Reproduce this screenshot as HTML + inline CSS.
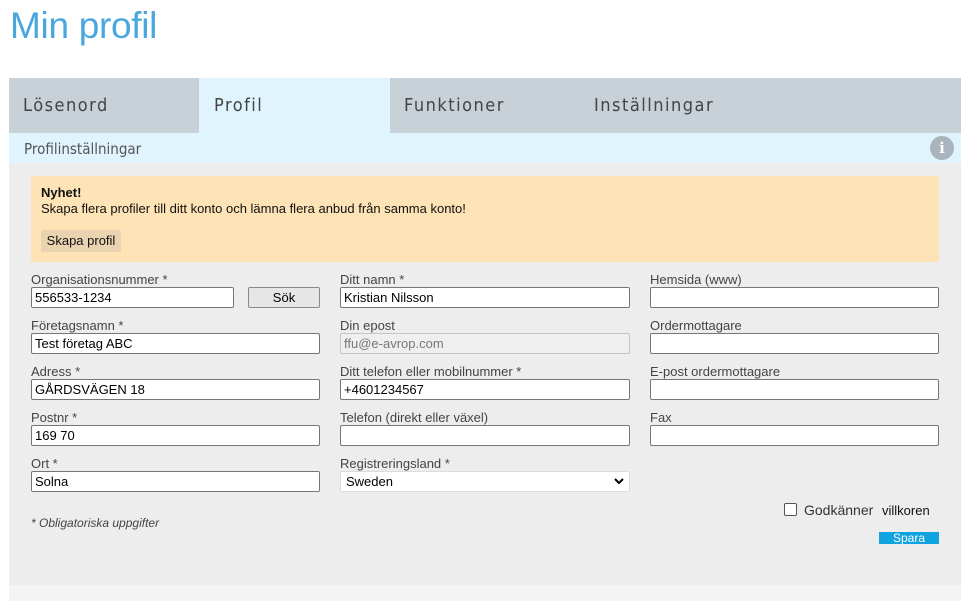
<!DOCTYPE html>
<html><head><meta charset="utf-8"><style>
*{box-sizing:border-box;margin:0;padding:0}
body{width:969px;height:606px;background:#fff;font-family:"Liberation Sans",sans-serif;position:relative;overflow:hidden}
.a{position:absolute}
h1{position:absolute;left:10px;top:5px;font-size:37px;color:#49a6de;font-family:"Liberation Sans",sans-serif;font-weight:normal;letter-spacing:-0.3px}
.tab{position:absolute;top:78px;height:55px;line-height:55px;font-size:18px;color:#444;letter-spacing:1.5px;font-family:"DejaVu Sans Condensed","Liberation Sans",sans-serif}
.lbl{position:absolute;font-size:13px;color:#444}
.inp{position:absolute;height:21px;background:#fff;border:1px solid #767676;border-radius:2px;font-size:13px;color:#000;padding-left:3px;line-height:19px}
</style></head><body>
<h1>Min profil</h1>
<div class="a" style="left:9px;top:78px;width:952px;height:55px;background:#c8d0d8"></div>
<div class="a" style="left:199px;top:78px;width:191px;height:55px;background:#dff4fd"></div>
<div class="tab" style="left:23px">Lösenord</div>
<div class="tab" style="left:214px">Profil</div>
<div class="tab" style="left:404px">Funktioner</div>
<div class="tab" style="left:594px">Inställningar</div>
<div class="a" style="left:9px;top:133px;width:952px;height:30px;background:#dff4fd"></div>
<div class="a" style="left:24px;top:140px;font-size:15px;color:#555;font-family:'DejaVu Sans Condensed',sans-serif">Profilinställningar</div>
<div class="a" style="left:930px;top:136px;width:24px;height:24px;border-radius:50%;background:#a9b4bc;color:#fff;font-weight:bold;font-size:15px;text-align:center;line-height:24px;font-family:'DejaVu Serif',serif">i</div>
<div class="a" style="left:9px;top:163px;width:952px;height:422px;background:#ededed"></div>
<div class="a" style="left:9px;top:585px;width:952px;height:16px;background:#f4f4f4"></div>
<div class="a" style="left:31px;top:176px;width:908px;height:86px;background:#fde3b5"></div>
<div class="a" style="left:41px;top:185px;font-size:13px;font-weight:bold;color:#111">Nyhet!</div>
<div class="a" style="left:41px;top:201px;font-size:13px;color:#111">Skapa flera profiler till ditt konto och lämna flera anbud från samma konto!</div>
<div class="a" style="left:41px;top:230px;width:80px;height:22px;background:#ead3b0;border-radius:2px;font-size:13px;line-height:22px;text-align:center;color:#111">Skapa profil</div>

<div class="lbl" style="left:31px;top:272px">Organisationsnummer *</div>
<div class="inp" style="left:31px;top:287px;width:203px">556533-1234</div>
<div class="a" style="left:248px;top:287px;width:72px;height:21px;background:#e6e6e6;border:1px solid #888;border-radius:2px;font-size:13px;text-align:center;line-height:19px">Sök</div>
<div class="lbl" style="left:31px;top:318px">Företagsnamn *</div>
<div class="inp" style="left:31px;top:333px;width:289px">Test företag ABC</div>
<div class="lbl" style="left:31px;top:364px">Adress *</div>
<div class="inp" style="left:31px;top:379px;width:289px">GÅRDSVÄGEN 18</div>
<div class="lbl" style="left:31px;top:410px">Postnr *</div>
<div class="inp" style="left:31px;top:425px;width:289px">169 70</div>
<div class="lbl" style="left:31px;top:456px">Ort *</div>
<div class="inp" style="left:31px;top:471px;width:289px">Solna</div>
<div class="lbl" style="left:31px;top:516px;font-style:italic;font-size:12px">* Obligatoriska uppgifter</div>

<div class="lbl" style="left:340px;top:272px">Ditt namn *</div>
<div class="inp" style="left:340px;top:287px;width:290px">Kristian Nilsson</div>
<div class="lbl" style="left:340px;top:318px">Din epost</div>
<div class="inp" style="left:340px;top:333px;width:290px;background:#efefef;border-color:#c4c4c4;color:#777">ffu@e-avrop.com</div>
<div class="lbl" style="left:340px;top:364px">Ditt telefon eller mobilnummer *</div>
<div class="inp" style="left:340px;top:379px;width:290px">+4601234567</div>
<div class="lbl" style="left:340px;top:410px">Telefon (direkt eller växel)</div>
<div class="inp" style="left:340px;top:425px;width:290px"></div>
<div class="lbl" style="left:340px;top:456px">Registreringsland *</div>
<div class="inp" style="left:340px;top:471px;width:290px;border-color:#ddd;padding-left:5px">Sweden<svg style="position:absolute;right:5px;top:6px" width="10" height="7" viewBox="0 0 10 7"><path d="M1 1l4 4 4-4" stroke="#000" stroke-width="2" fill="none"/></svg></div>

<div class="lbl" style="left:650px;top:272px">Hemsida (www)</div>
<div class="inp" style="left:650px;top:287px;width:289px"></div>
<div class="lbl" style="left:650px;top:318px">Ordermottagare</div>
<div class="inp" style="left:650px;top:333px;width:289px"></div>
<div class="lbl" style="left:650px;top:364px">E-post ordermottagare</div>
<div class="inp" style="left:650px;top:379px;width:289px"></div>
<div class="lbl" style="left:650px;top:410px">Fax</div>
<div class="inp" style="left:650px;top:425px;width:289px"></div>

<div class="a" style="left:784px;top:503px;width:13px;height:13px;border:1px solid #555;border-radius:2px;background:#fff"></div>
<div class="lbl" style="left:804px;top:502px;font-size:14px;color:#333">Godkänner</div>
<div class="lbl" style="left:882px;top:503px;color:#111">villkoren</div>
<div class="a" style="left:879px;top:532px;width:60px;height:12px;background:#0fa3e0;color:#fff;font-size:12px;text-align:center;line-height:12px">Spara</div>
</body></html>
